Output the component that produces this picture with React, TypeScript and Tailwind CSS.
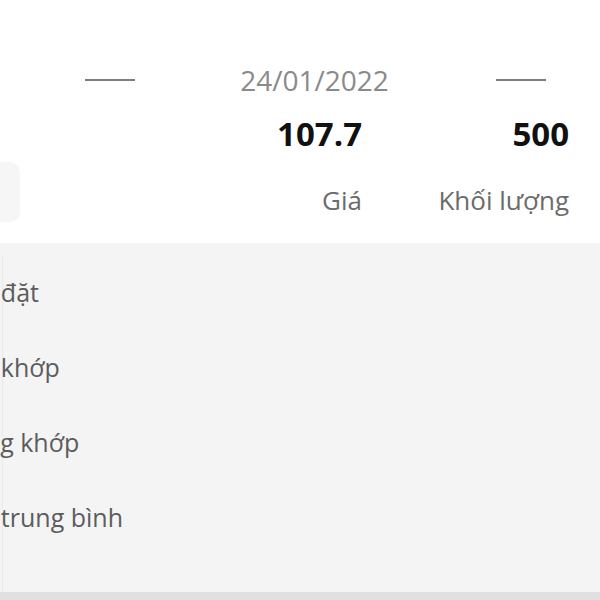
import React from "react";

export default function App() {
  const rows = ["Giá đặt", "Giá khớp", "Tổng khớp", "Giá trung bình"];
  return (
    <div className="w-[600px] h-[600px] overflow-hidden bg-white flex flex-col font-['Open_Sans',sans-serif]">
      <div className="h-[243px] flex flex-col shrink-0">
        <div className="h-[55px]" />
        <div className="h-[50px] flex items-center">
          <div className="ml-[85px] w-[50px] h-[2px] bg-[#7d7d7d]" />
          <div className="w-[361px] flex justify-center pr-[2px]">
            <span className="text-[28px] leading-[38px] text-[#8a8a8a]">24/01/2022</span>
          </div>
          <div className="w-[50px] h-[2px] bg-[#7d7d7d]" />
        </div>
        <div className="h-[57px] flex items-center justify-end pr-[31px]">
          <span className="text-[33px] leading-[44px] font-bold text-[#111111]">107.7</span>
          <div className="w-[207px] text-right text-[33px] leading-[44px] font-bold text-[#111111]">500</div>
        </div>
        <div className="h-[60px] flex">
          <div className="w-[20px] h-[60px] bg-[#f6f6f6] rounded-r-[10px]" />
          <div className="flex-1 flex justify-end pr-[31px] pt-[20px]">
            <span className="text-[26px] leading-[36px] text-[#6b6b6b]">Giá</span>
            <div className="w-[207px] text-right text-[26px] leading-[36px] text-[#6b6b6b]">Khối lượng</div>
          </div>
        </div>
      </div>
      <div className="h-[349px] shrink-0 bg-[#f4f4f4] pt-[11px] flex">
        <div className="w-[3px] shrink-0 border-r border-[#ebebeb]" />
        <div className="flex flex-col -ml-[47px]">
          {rows.map((r) => (
            <div key={r} className="h-[75px] flex items-center">
              <span className="text-[25px] leading-[36px] text-[#5c5c5c] whitespace-nowrap">{r}</span>
            </div>
          ))}
        </div>
      </div>
      <div className="h-[8px] shrink-0 bg-[#e0e0e0]" />
    </div>
  );
}
